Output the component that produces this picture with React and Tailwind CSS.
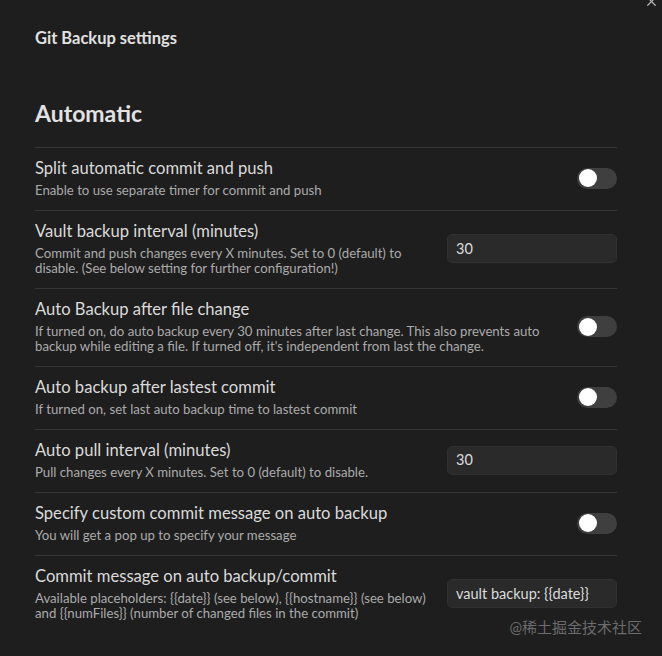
import { X } from "lucide-react";

const rows = [
  {
    title: "Split automatic commit and push",
    desc: "Enable to use separate timer for commit and push",
    control: "toggle",
  },
  {
    title: "Vault backup interval (minutes)",
    desc: "Commit and push changes every X minutes. Set to 0 (default) to disable. (See below setting for further configuration!)",
    control: "input",
    value: "30",
  },
  {
    title: "Auto Backup after file change",
    desc: "If turned on, do auto backup every 30 minutes after last change. This also prevents auto backup while editing a file. If turned off, it's independent from last the change.",
    control: "toggle",
  },
  {
    title: "Auto backup after lastest commit",
    desc: "If turned on, set last auto backup time to lastest commit",
    control: "toggle",
  },
  {
    title: "Auto pull interval (minutes)",
    desc: "Pull changes every X minutes. Set to 0 (default) to disable.",
    control: "input",
    value: "30",
  },
  {
    title: "Specify custom commit message on auto backup",
    desc: "You will get a pop up to specify your message",
    control: "toggle",
  },
  {
    title: "Commit message on auto backup/commit",
    desc: "Available placeholders: {{date}} (see below), {{hostname}} (see below) and {{numFiles}} (number of changed files in the commit)",
    control: "input",
    value: "vault backup: {{date}}",
  },
];

const Toggle = () => (
  <div className="flex h-[21px] w-[40px] shrink-0 items-center rounded-full bg-[#3f3f3f] px-[2px]">
    <div className="h-[18px] w-[18px] rounded-full bg-white" />
  </div>
);

const TextInput = ({ value }) => (
  <div className="flex h-[29px] w-[170px] shrink-0 items-center rounded-[5px] border border-[#303030] bg-[#2a2a2a] px-2 text-[14.5px] text-[#dcdcdc]">
    {value}
  </div>
);

const SettingRow = ({ title, desc, control, value }) => (
  <div className="flex items-center gap-4 border-t border-[#363636] pt-[10px] pb-3">
    <div className="flex-1">
      <div className="text-[16.6px] leading-[20px] text-[#dadada]">{title}</div>
      <div className="mt-[5px] text-[13.2px] leading-[15px] text-[#ababab]">{desc}</div>
    </div>
    {control === "toggle" ? <Toggle /> : <TextInput value={value} />}
  </div>
);

export default function App() {
  return (
    <div
      className="relative h-[656px] w-full overflow-hidden bg-[#1e1e1e] px-[35px]"
      style={{ fontFamily: "Lato, 'Noto Sans', 'Noto Sans CJK SC', sans-serif" }}
    >
      {/* Close */}
      <div className="absolute top-[-6px] right-[3px] text-[#b5b5b5]">
        <X size={15} strokeWidth={2} />
      </div>

      <div className="pt-[28px] text-[16.5px] font-bold leading-[20px] text-[#e2e2e2]">
        Git Backup settings
      </div>

      <div className="mt-[50px] mb-[19px] text-[23px] font-bold leading-[30px] text-[#e2e2e2]">
        Automatic
      </div>

      <div className="w-[582px]">
        {rows.map((r) => (
          <SettingRow key={r.title} {...r} />
        ))}
      </div>

      {/* Watermark */}
      <div className="absolute right-[20px] bottom-[18px] text-[15px] text-[#6c6c6c]">
        @稀土掘金技术社区
      </div>
    </div>
  );
}
